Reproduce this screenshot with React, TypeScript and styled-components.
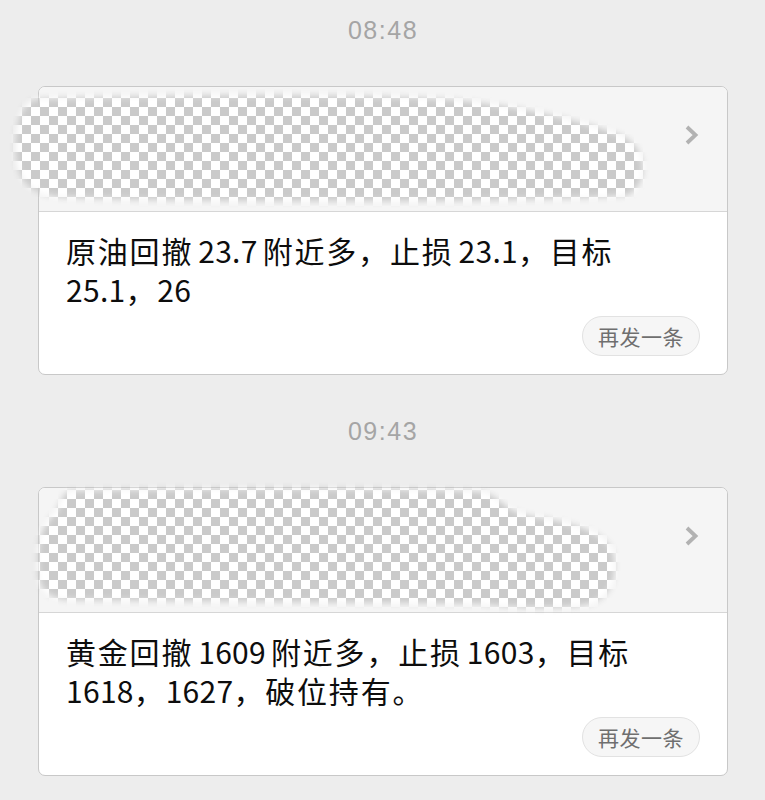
import { createGlobalStyle, styled } from "styled-components";

const GlobalStyle = createGlobalStyle`
  html, body {
    margin: 0;
    padding: 0;
    background: #ededed;
  }
  body {
    font-family: "Liberation Sans", "Noto Sans CJK SC", sans-serif;
    -webkit-font-smoothing: antialiased;
  }
`;

const Page = styled.div`
  display: flex;
  flex-direction: column;
  gap: 42px;
  padding: 16px 37px 40px 38px;
  min-height: 800px;
  box-sizing: border-box;
`;

const Section = styled.section`
  display: flex;
  flex-direction: column;
  gap: 42px;
`;

const TimeStamp = styled.div`
  text-align: center;
  font-size: 25px;
  line-height: 28px;
  letter-spacing: 1.5px;
  color: #a5a5a5;
`;

const Card = styled.div`
  border: 1px solid #c8c8c8;
  border-radius: 7px;
  background: #fff;
`;

const CardHeader = styled.div`
  position: relative;
  height: 125px;
  display: flex;
  justify-content: flex-end;
  align-items: flex-start;
  padding: 37px 28px 0 0;
  box-sizing: border-box;
  background: #f5f5f5;
  border-bottom: 1px solid #d6d6d6;
  border-radius: 6px 6px 0 0;
`;

const Mosaic = styled.svg`
  position: absolute;
  left: -39px;
  top: 0;
  pointer-events: none;
`;

const CardBody = styled.div`
  display: flex;
  flex-direction: column;
  padding: 19px 27px 18px 27px;
  border-radius: 0 0 6px 6px;
`;

const Message = styled.p`
  margin: 0;
  max-width: 600px;
  font-family: "Noto Sans CJK SC", sans-serif;
  font-size: 30px;
  line-height: 38.5px;
  letter-spacing: 1.8px;
  color: #0d0d0d;
`;

const Num = styled.span<{ $l?: boolean; $r?: boolean }>`
  margin-left: ${(p) => (p.$l ? "5px" : "0")};
  margin-right: ${(p) => (p.$r ? "5px" : "0")};
  letter-spacing: 0.3px;
`;

const ButtonRow = styled.div`
  display: flex;
  justify-content: flex-end;
  margin-top: 8px;
`;

const ResendButton = styled.button`
  height: 40px;
  padding: 0 15px;
  border: 1px solid #e2e2e2;
  border-radius: 20px;
  background: #f6f6f6;
  color: #6f6f6f;
  font-family: "Noto Sans CJK SC", sans-serif;
  font-size: 21px;
  letter-spacing: 0.5px;
  line-height: 38px;
  cursor: pointer;
`;

const Chevron = () => (
  <svg width="15" height="22" viewBox="0 0 15 22">
    <path
      d="M3 3 L11.5 11 L3 19"
      fill="none"
      stroke="#b2b2b2"
      strokeWidth="3.8"
      strokeLinejoin="miter"
    />
  </svg>
);

interface MaskProps {
  id: string;
  shape: string;
}

const Blur = ({ id, shape }: MaskProps) => (
  <Mosaic width="765" height="125" viewBox="0 0 765 125" overflow="visible">
    <defs>
      <pattern id={`chk-${id}`} width="18" height="18" patternUnits="userSpaceOnUse" x="4" y="2">
        <rect width="18" height="18" fill="#ffffff" />
        <rect width="9" height="9" fill="#cacaca" />
        <rect x="9" y="9" width="9" height="9" fill="#cacaca" />
      </pattern>
      <filter id={`soft-${id}`} x="-10%" y="-30%" width="120%" height="160%">
        <feGaussianBlur stdDeviation="3" />
      </filter>
      <mask id={`mask-${id}`} maskUnits="userSpaceOnUse" x="0" y="-20" width="765" height="165">
        <path d={shape} fill="#fff" filter={`url(#soft-${id})`} />
      </mask>
    </defs>
    <rect x="0" y="-10" width="765" height="140" fill={`url(#chk-${id})`} mask={`url(#mask-${id})`} />
  </Mosaic>
);

type Part = string | { n: string; l?: boolean; r?: boolean };

const messages: { time: string; parts: Part[]; shape: string }[] = [
  {
    time: "08:48",
    parts: ["原油回撤", { n: "23.7", l: true, r: true }, "附近多，止损", { n: "23.1", l: true }, "，目标", { n: "25.1" }, "，", { n: "26" }],
    shape:
      "M40 12 C200 6, 380 8, 440 12 C520 18, 580 34, 620 48 C648 60, 650 96, 628 108 C560 116, 160 116, 60 110 C20 106, 14 84, 16 50 C18 28, 24 14, 40 12 Z",
  },
  {
    time: "09:43",
    parts: ["黄金回撤", { n: "1609", l: true, r: true }, "附近多，止损", { n: "1603", l: true }, "，目标", { n: "1618" }, "，", { n: "1627" }, "，破位持有。"],
    shape:
      "M70 3 C200 0, 400 0, 480 4 C500 6, 500 22, 530 28 C580 36, 612 46, 614 70 C616 95, 610 108, 590 116 C560 122, 520 120, 480 116 L70 112 C40 110, 38 95, 38 75 C38 55, 40 40, 56 24 C62 14, 62 6, 70 3 Z",
  },
];

export default function App() {
  return (
    <>
      <GlobalStyle />
      <Page>
        {messages.map((item, i) => (
          <Section key={item.time}>
            <TimeStamp>{item.time}</TimeStamp>
            <Card>
              <CardHeader>
                <Blur id={`m${i}`} shape={item.shape} />
                <Chevron />
              </CardHeader>
              <CardBody>
                <Message>
                  {item.parts.map((p, j) =>
                    typeof p === "string" ? (
                      p
                    ) : (
                      <Num key={j} $l={p.l} $r={p.r}>
                        {p.n}
                      </Num>
                    )
                  )}
                </Message>
                <ButtonRow>
                  <ResendButton>再发一条</ResendButton>
                </ButtonRow>
              </CardBody>
            </Card>
          </Section>
        ))}
      </Page>
    </>
  );
}
